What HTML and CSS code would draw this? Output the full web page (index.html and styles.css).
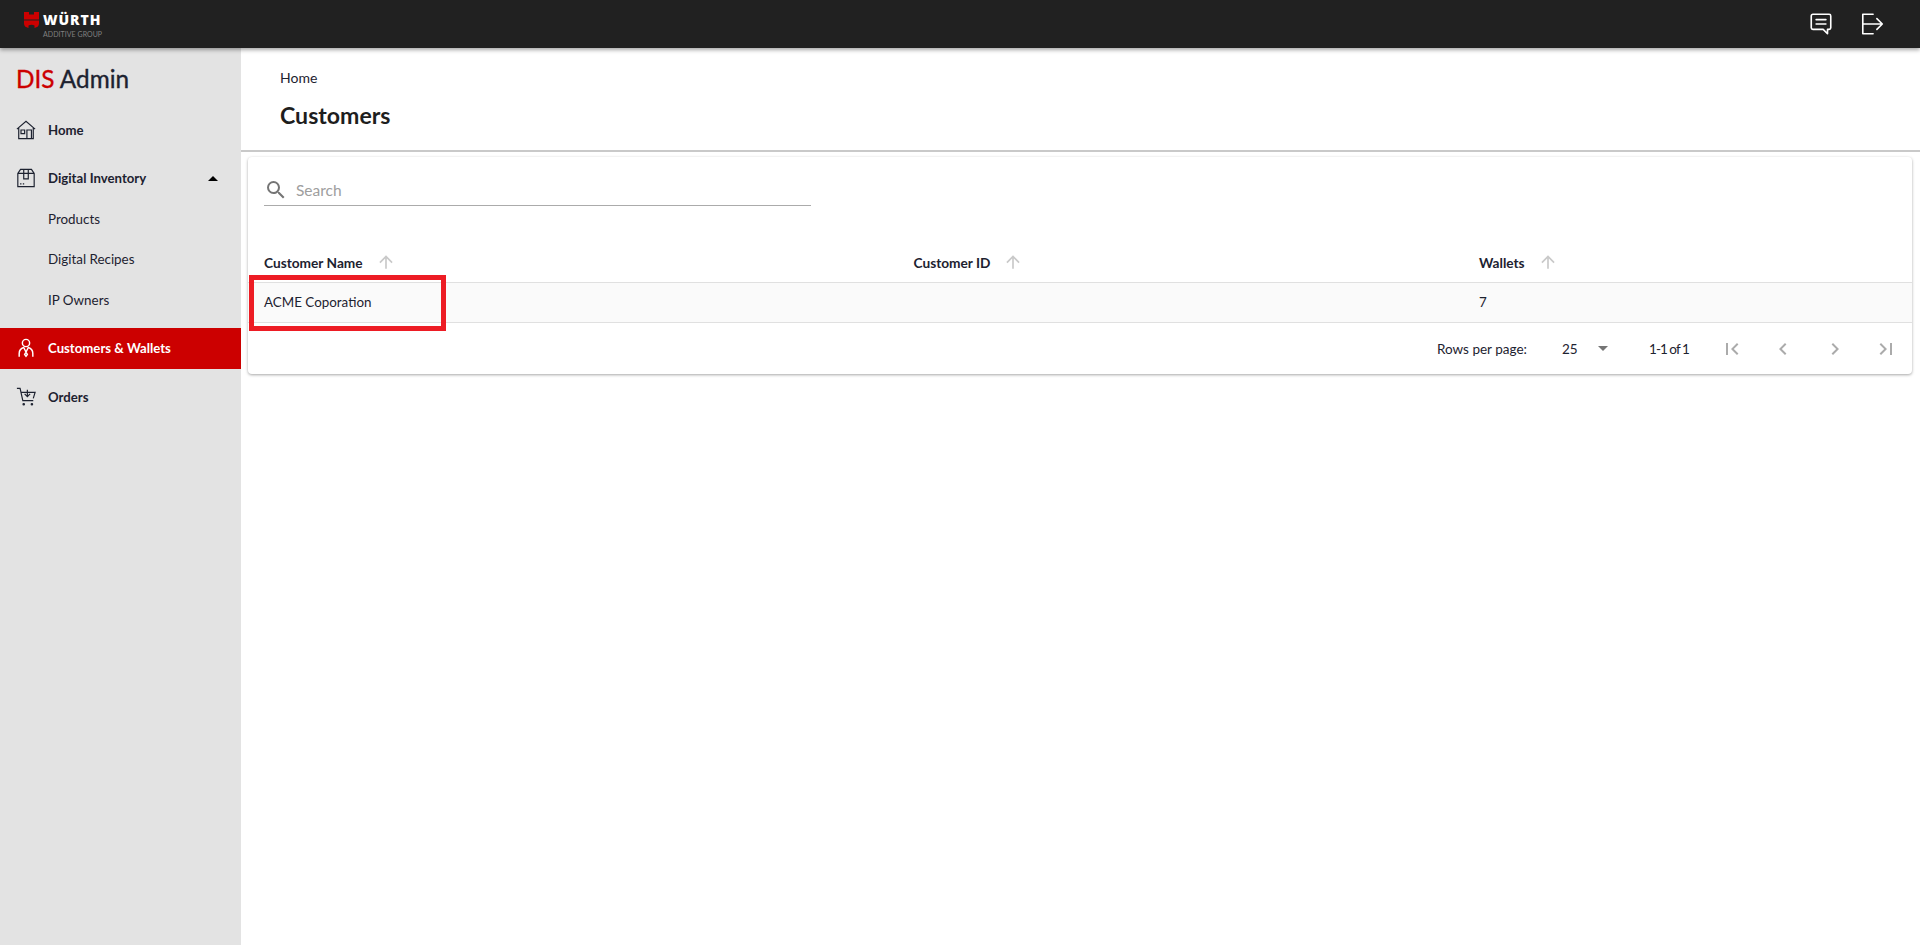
FILE: index.html
```html
<!DOCTYPE html>
<html lang="en">
<head>
<meta charset="utf-8">
<title>DIS Admin - Customers</title>
<link rel="stylesheet" href="styles.css">
</head>
<body>
<header class="topbar">
  <div class="brand">
    <svg class="brand-mark" viewBox="0 0 15 16" width="15" height="16"><path fill="#cc0000" d="M0 0h5v2.500h5V0H15v7.500H0zM0 8.500h15v3Q15 15 10.500 16v-2.500Q7.500 12 4.500 13.500V16Q0 15 0 11.500z"/></svg>
    <div class="brand-text">
      <span class="brand-name">WÜRTH</span>
      <span class="brand-sub">ADDITIVE GROUP</span>
    </div>
  </div>
  <div class="top-actions">
    <svg class="top-icon" viewBox="0 0 24 24" fill="none" stroke="#fff" stroke-width="1.500" stroke-linejoin="round" stroke-linecap="round"><path d="M4.500 3h15A1.500 1.500 0 0 1 21 4.500v11a1.500 1.500 0 0 1-1.500 1.500H18v4l-4-4H4.500A1.500 1.500 0 0 1 3 15.500v-11A1.500 1.500 0 0 1 4.500 3z"/><path d="M7.500 8h9M7.500 12h9"/></svg>
    <svg class="top-icon" viewBox="0 0 24 24" fill="none" stroke="#fff" stroke-width="1.500" stroke-linejoin="round" stroke-linecap="round"><path d="M13 3H3.500v18H13M3.500 12H21.500M16.500 7l5 5-5 5"/></svg>
  </div>
</header>
<div class="shell">
  <nav class="sidebar">
    <div class="app-title"><span class="app-dis">DIS</span> Admin</div>
    <a class="nav-item">
      <svg class="nav-icon" viewBox="0 0 22 22" fill="none" stroke="#1d2230" stroke-width="1.300"><path d="M1 10 11 1.500 21 10M3 8.500V20.500H19V8.500"/><path d="M12 20.500V11h5v9.500M5.500 11h4v4h-4z"/></svg>
      <span>Home</span>
    </a>
    <a class="nav-item nav-expand">
      <svg class="nav-icon" viewBox="0 0 22 22" fill="none" stroke="#1d2230" stroke-width="1.300"><path d="M5 1.500H17L20 6V20.500H2V6zM2 6H20M8.500 1.500V12H13.500V1.500M4.500 17.500H6M7.500 17.500H9"/></svg>
      <span>Digital Inventory</span>
      <span class="caret-up"></span>
    </a>
    <a class="sub-item">Products</a>
    <a class="sub-item">Digital Recipes</a>
    <a class="sub-item">IP Owners</a>
    <a class="nav-item nav-active">
      <svg class="nav-icon" viewBox="0 0 22 22" fill="none" stroke="#fff" stroke-width="1.600"><circle cx="11" cy="5.500" r="4"/><path d="M3.500 20.500V17Q3.500 12 8.500 10.500L11 15.500 13.500 10.500Q18.500 12 18.500 17V20.500M11 15.500 9.500 18 11 20 12.500 18z"/></svg>
      <span>Customers &amp; Wallets</span>
    </a>
    <a class="nav-item nav-orders">
      <svg class="nav-icon" viewBox="0 0 22 22" fill="none" stroke="#1d2230" stroke-width="1.300"><path d="M1 1.500H4.500L7.500 15H19M5.500 6H21L19 12.500"/><path d="M12.500 3V10M9.500 7.500 12.500 10.500 15.500 7.500"/><circle cx="8.500" cy="19" r=".8"/><circle cx="17.500" cy="19" r=".8"/></svg>
      <span>Orders</span>
    </a>
  </nav>
  <main class="content">
    <section class="page-head">
      <div class="crumb">Home</div>
      <h1 class="page-title">Customers</h1>
    </section>
    <section class="card">
      <div class="search">
        <svg class="search-icon" viewBox="0 0 24 24"><path fill="#757575" d="M15.500 14h-.79l-.28-.27A6.470 6.470 0 0 0 16 9.500 6.500 6.500 0 1 0 9.500 16c1.610 0 3.090-.59 4.230-1.570l.27.28v.79l5 4.990L20.490 19l-4.990-5zm-6 0C7.010 14 5 11.990 5 9.500S7.010 5 9.500 5 14 7.010 14 9.500 11.990 14 9.500 14z"/></svg>
        <span class="search-hint">Search</span>
      </div>
      <div class="grid-row grid-head">
        <div class="cell"><b>Customer Name</b><svg class="sort" viewBox="0 0 24 24"><path fill="#c9c9c9" d="M4 12l1.410 1.410L11 7.830V20h2V7.830l5.580 5.590L20 12l-8-8-8 8z"/></svg></div>
        <div class="cell"><b>Customer ID</b><svg class="sort" viewBox="0 0 24 24"><path fill="#c9c9c9" d="M4 12l1.410 1.410L11 7.830V20h2V7.830l5.580 5.590L20 12l-8-8-8 8z"/></svg></div>
        <div class="cell"><b>Wallets</b><svg class="sort" viewBox="0 0 24 24"><path fill="#c9c9c9" d="M4 12l1.410 1.410L11 7.830V20h2V7.830l5.580 5.590L20 12l-8-8-8 8z"/></svg></div>
      </div>
      <div class="grid-row grid-body">
        <div class="cell">ACME Coporation</div>
        <div class="cell"></div>
        <div class="cell">7</div>
      </div>
      <div class="pager">
        <span class="pager-label">Rows per page:</span>
        <span class="pager-size">25</span>
        <span class="caret-down"></span>
        <span class="pager-range">1-1 of 1</span>
        <div class="pager-btns">
          <svg viewBox="0 0 24 24"><path fill="#ababab" d="M18.410 16.590 13.820 12l4.590-4.590L17 6l-6 6 6 6zM6 6h2v12H6z"/></svg>
          <svg viewBox="0 0 24 24"><path fill="#ababab" d="M15.410 7.410 14 6l-6 6 6 6 1.410-1.410L10.830 12z"/></svg>
          <svg viewBox="0 0 24 24"><path fill="#ababab" d="M10 6 8.590 7.410 13.170 12l-4.580 4.590L10 18l6-6z"/></svg>
          <svg viewBox="0 0 24 24"><path fill="#ababab" d="M5.590 7.410 10.180 12l-4.590 4.590L7 18l6-6-6-6zM16 6h2v12h-2z"/></svg>
        </div>
      </div>
      <div class="callout"></div>
    </section>
  </main>
</div>
</body>
</html>
```

FILE: styles.css
```css
* { box-sizing: border-box; }
html, body { margin: 0; height: 100%; }
body {
  font-family: "Lato", "Open Sans", sans-serif;
  font-size: 13.400px;
  color: #1d2230;
  background: #fff;
  display: flex;
  flex-direction: column;
  overflow: hidden;
}
.topbar {
  height: 48px;
  flex: none;
  background: #212121;
  display: flex;
  align-items: flex-start;
  justify-content: space-between;
  padding: 12px 35px 0 24px;
  box-shadow: 0 2px 4px rgba(0,0,0,.35);
  position: relative;
  z-index: 2;
}
.brand { display: flex; align-items: flex-start; gap: 4px; }
.brand-text { display: flex; flex-direction: column; }
.brand-name {
  color: #fff;
  font-family: "Open Sans", sans-serif;
  font-weight: 800;
  font-size: 14px;
  line-height: 15px;
  letter-spacing: .95px;
}
.brand-sub {
  color: #808080;
  font-size: 7px;
  line-height: 9px;
  letter-spacing: .05px;
  margin-top: 3px;
}
.top-actions { display: flex; gap: 25px; margin-top: -1px; }
.top-icon { width: 26px; height: 26px; display: block; }
.shell { flex: 1; display: flex; min-height: 0; }
.sidebar {
  width: 241px;
  flex: none;
  background: #e3e3e3;
  display: flex;
  flex-direction: column;
  padding-top: 16px;
}
.app-title {
  font-size: 24.300px;
  line-height: 30px;
  padding-left: 16px;
  -webkit-text-stroke: .35px currentColor;
  margin-bottom: 15.500px;
}
.app-dis { color: #cc0000; }
.nav-item {
  height: 41px;
  display: flex;
  align-items: center;
  padding-left: 16px;
  gap: 12px;
  font-weight: 700;
  font-size: 13.200px;
}
.nav-icon { width: 20px; height: 22px; flex: none; }
.nav-expand { margin-top: 7px; }
.caret-up {
  width: 0; height: 0;
  border-left: 5px solid transparent;
  border-right: 5px solid transparent;
  border-bottom: 5px solid #000;
  margin-left: auto;
  margin-right: 23px;
}
.sub-item {
  height: 40.500px;
  display: flex;
  align-items: center;
  padding-left: 48px;
}
.nav-active { background: #cc0000; color: #fff; margin-top: 8px; padding-bottom: 2px; }
.nav-orders { margin-top: 7.500px; }
.content { flex: 1; min-width: 0; display: flex; flex-direction: column; }
.page-head {
  height: 104px;
  border-bottom: 2px solid #c9c9c9;
  padding: 20px 0 0 39px;
}
.crumb { font-size: 14px; line-height: 20px; }
.page-title {
  margin: 11.500px 0 0;
  font-size: 23.100px;
  line-height: 30px;
  font-weight: 700;
  color: #1e1e1e;
}
.card {
  position: relative;
  margin: 5px 8px 0 7px;
  height: 217px;
  background: #fff;
  border-radius: 4px;
  box-shadow: 0 1px 3px rgba(0,0,0,.35);
  display: flow-root;
}
.search {
  width: 547px;
  margin-left: 16px;
  margin-top: 15px;
  height: 34px;
  border-bottom: 1px solid #ababab;
  display: flex;
  align-items: center;
  gap: 8px;
  padding-top: 3px;
}
.search-icon { width: 24px; height: 24px; flex: none; }
.search-hint { color: #9e9e9e; font-size: 15.500px; }
.grid-row {
  display: grid;
  grid-template-columns: 649.500px 565.500px 1fr;
  padding-left: 16px;
}
.grid-head {
  margin-top: 43px;
  height: 34px;
  padding-bottom: 7px;
  border-bottom: 1px solid #e0e0e0;
}
.grid-body {
  height: 40px;
  padding-bottom: 1px;
  background: #fafafa;
  border-bottom: 1px solid #e0e0e0;
}
.cell { display: flex; align-items: center; }
.cell b { font-weight: 700; font-size: 13.700px; }
.sort { width: 20px; height: 20px; margin-left: 13px; }
.pager { height: 51px; display: flex; align-items: center; font-size: 13.500px; padding-left: 1189px; }
.pager-label { width: 125px; }
.pager-size { width: 36px; }
.caret-down {
  width: 0; height: 0;
  border-left: 5px solid transparent;
  border-right: 5px solid transparent;
  border-top: 5px solid #757575;
  margin-right: 41px;
}
.pager-range { width: 71px; letter-spacing: -.95px; }
.pager-btns { display: flex; gap: 27.300px; }
.pager-btns svg { width: 24px; height: 24px; display: block; }
.callout {
  position: absolute;
  left: 1px;
  top: 118px;
  width: 197px;
  height: 56px;
  border: 5px solid #ed1c24;
}
```
